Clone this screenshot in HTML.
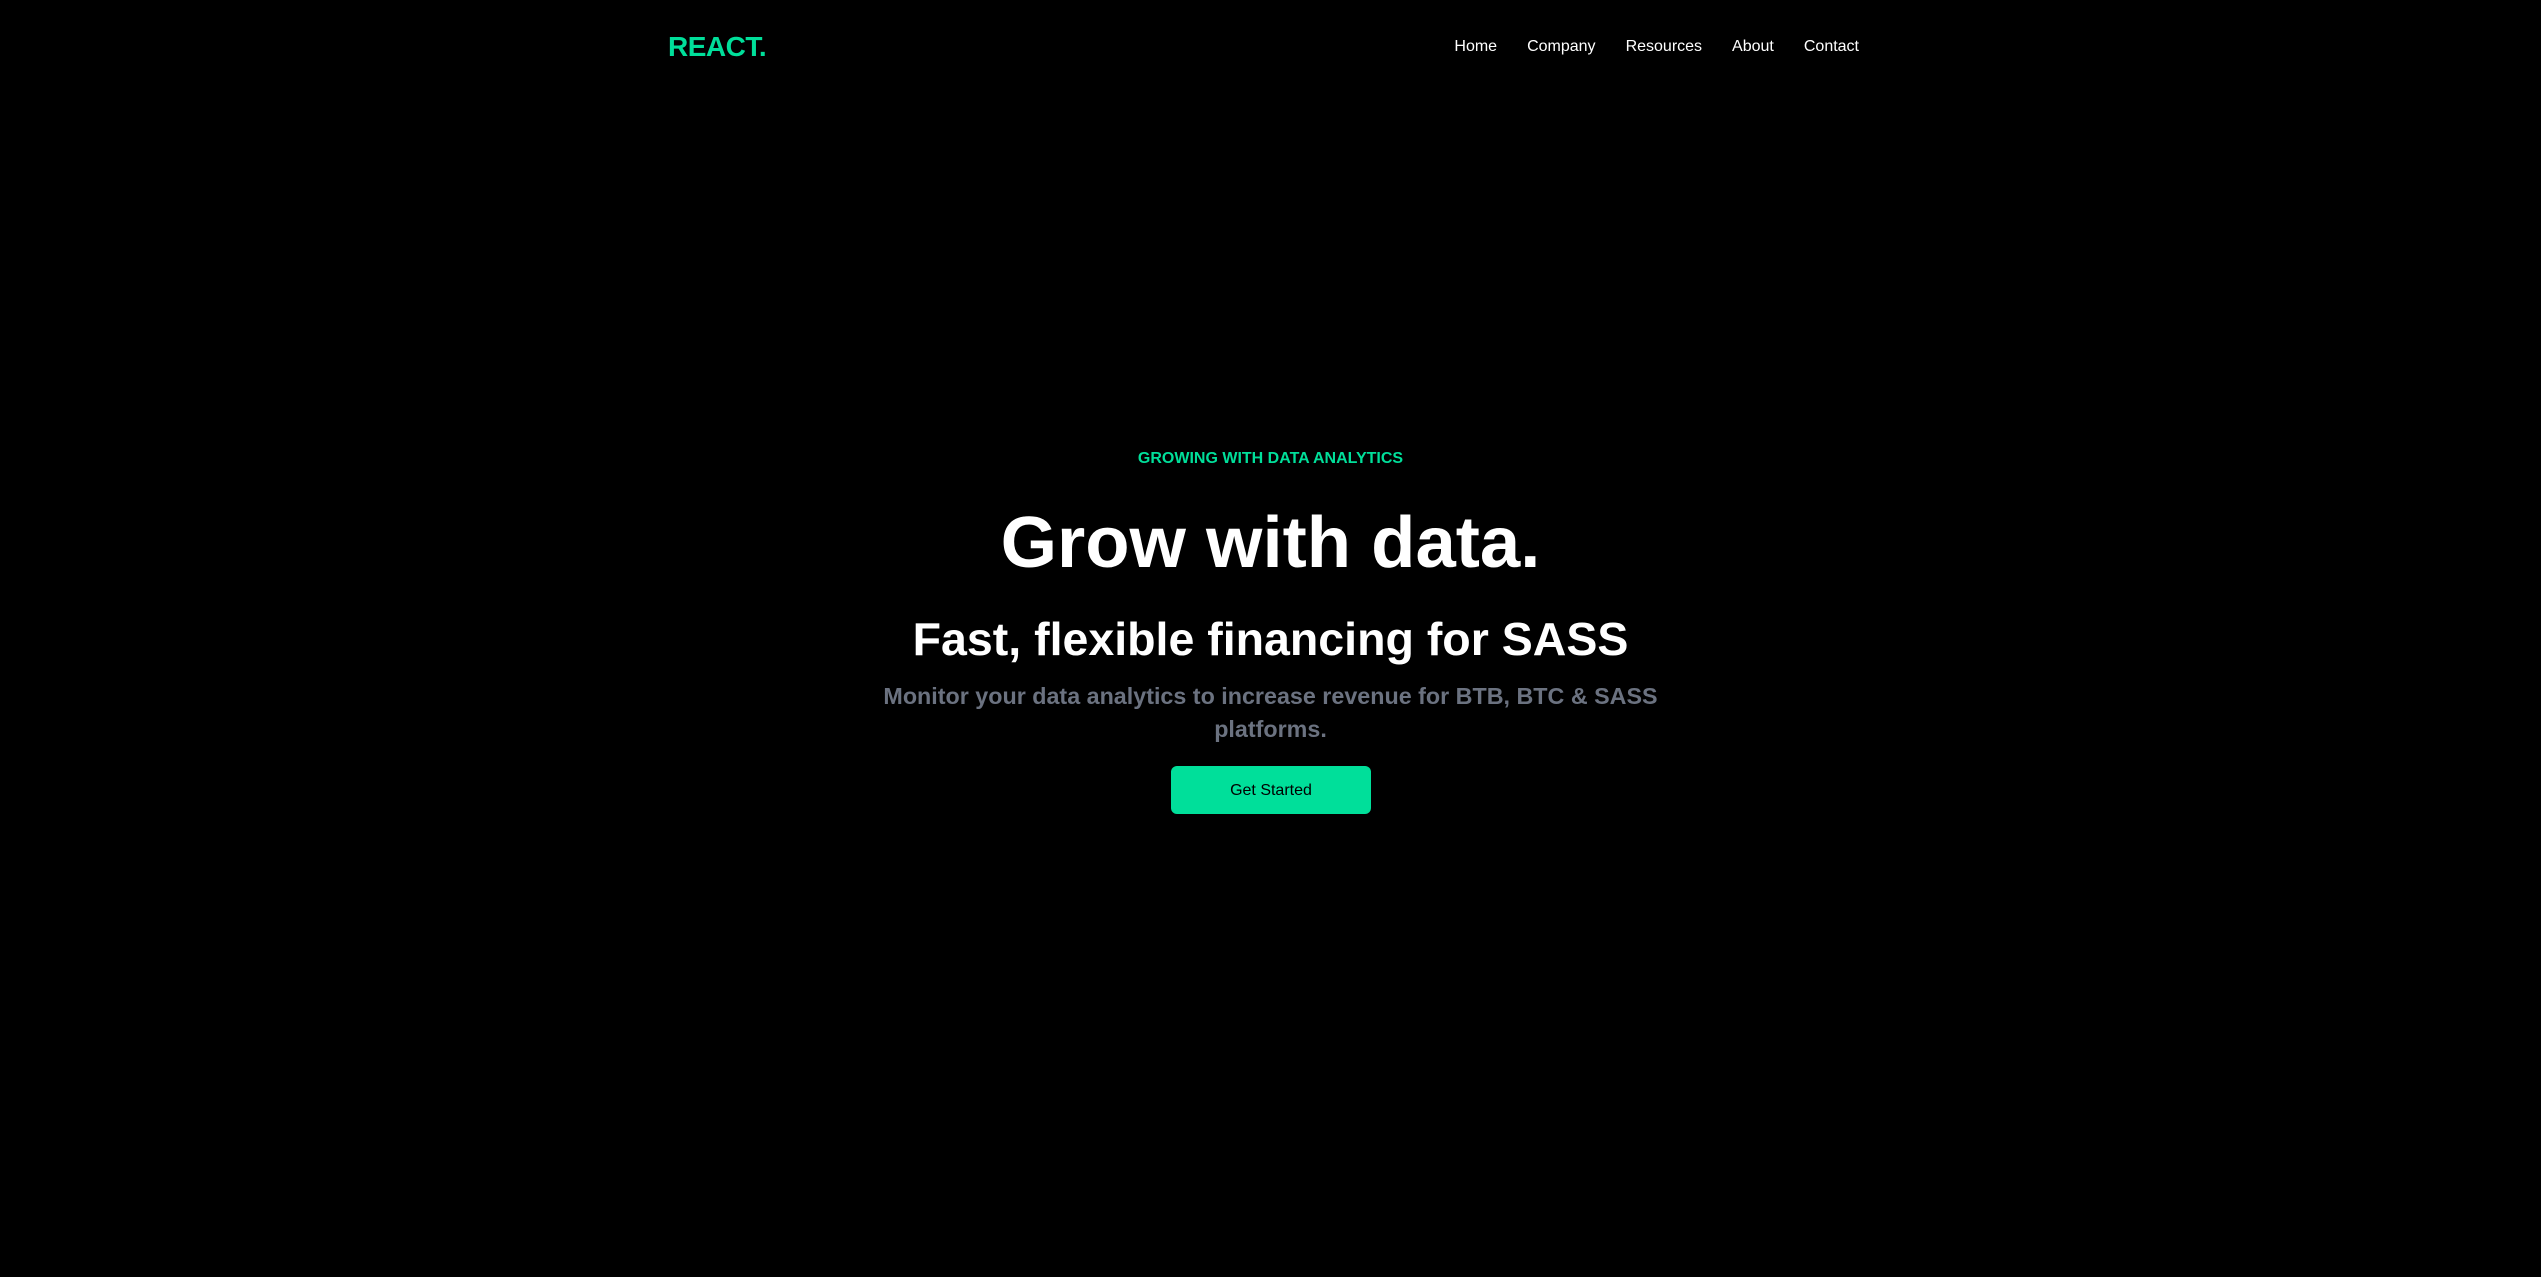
<!DOCTYPE html>
<html><head><meta charset="utf-8"><style>
*{margin:0;padding:0;box-sizing:border-box}
html,body{width:2541px;height:1277px;background:#000;color:#fff;font-family:"Liberation Sans",sans-serif;overflow:hidden}
.nav{position:absolute;left:650px;width:1240px;top:0;height:94px;display:flex;justify-content:space-between;align-items:center;padding:0 16px}
.logo{color:#00df9a;font-weight:bold;font-size:28px;letter-spacing:-0.5px;margin-left:2px}
.nav ul{list-style:none;display:flex;margin-right:15px}
.nav li{padding:0 15px;font-size:16px}
.nav li:last-child{padding-right:0}
.hero{position:absolute;left:0;width:2541px;text-align:center}
.t1{top:450px;color:#00df9a;font-weight:bold;font-size:16px}
.t2{top:501px;font-weight:bold;font-size:72.5px}
.t3{top:612px;font-weight:bold;font-size:46.5px}
.t4{top:680px;left:870px;width:801px;color:#6b7280;font-weight:bold;font-size:23.3px;line-height:33px}
.btn{position:absolute;left:1171px;top:766px;width:200px;height:48px;background:#00df9a;border-radius:6px;color:#000;font-size:16px;display:flex;align-items:center;justify-content:center;padding-top:2px}
</style></head><body>
<div class="nav"><div class="logo">REACT.</div><ul><li>Home</li><li>Company</li><li>Resources</li><li>About</li><li>Contact</li></ul></div>
<div class="hero t1">GROWING WITH DATA ANALYTICS</div>
<div class="hero t2">Grow with data.</div>
<div class="hero t3">Fast, flexible financing for SASS</div>
<div class="hero t4">Monitor your data analytics to increase revenue for BTB, BTC &amp; SASS platforms.</div>
<div class="btn">Get Started</div>
</body></html>
